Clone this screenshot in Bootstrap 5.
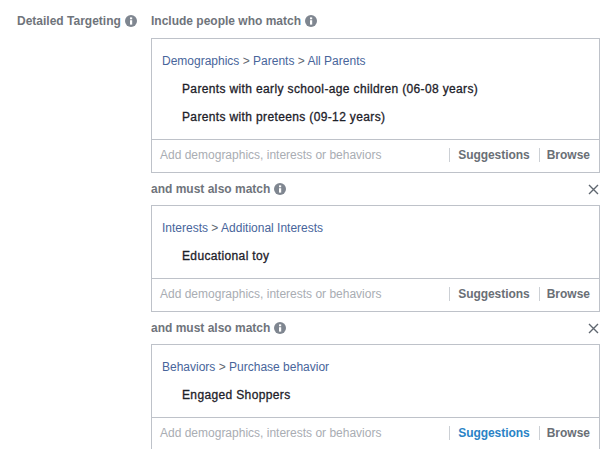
<!DOCTYPE html>
<html lang="en">
<head>
<meta charset="utf-8">
<title>Detailed Targeting</title>
<link href="https://cdn.jsdelivr.net/npm/bootstrap@5.3.0/dist/css/bootstrap.min.css" rel="stylesheet">
<style>
html,body{height:449px;overflow:hidden;background:#fff}
body{font-family:"Liberation Sans",Arial,sans-serif;font-size:12px;color:#1d2129;line-height:16px}
.page-wrap{padding:13px 13px 0 17px}
.side-label{width:134px;flex:none;font-weight:700;color:#6f747b}
.main-col{width:449px;flex:none}
.head-row{height:18px;margin-bottom:7px;font-weight:700;color:#6f747b}
.head-row.next{height:17px;margin-top:8px;margin-bottom:7px}
.info-ico{width:12px;height:12px;margin-left:4px;vertical-align:-1.5px}
.close-ico{width:11px;height:11px;margin:3px 1px 0 0;display:block}
.tbox{border:1px solid #bec2c9}
.tbox-body{padding:14px 10px 3px 10px}
.crumb{color:#48659b;height:16px;margin-bottom:12px}
.crumb span{color:#606770}
.pick{padding-left:20px;color:#1d2129;height:16px;margin-bottom:12px;letter-spacing:.36px;-webkit-text-stroke:.3px #1d2129}
.tbox-foot{height:33px;border-top:1px solid #bec2c9;margin-top:-1px;padding:0 9px 2px 8px}
.tbox-foot .ph{color:#a9adb3}
.foot-link{font-weight:700;color:#6a6f76;border-left:1px solid #ccd0d5;height:14px;line-height:14px;padding-left:7px;margin-left:9px}
.foot-link.sug{letter-spacing:-.05px;padding-left:8px}
.foot-link.active{color:#2a83c6}
</style>
</head>
<body>
<svg width="0" height="0" class="d-block" aria-hidden="true"><defs><symbol id="inf" viewBox="0 0 12 12"><circle cx="6" cy="6" r="6" fill="#7f8690"/><rect x="5" y="5.2" width="2.2" height="4.4" fill="#fff"/><rect x="5" y="2.4" width="2.2" height="1.9" fill="#fff"/></symbol></defs></svg>
<div class="page-wrap d-flex">
  <div class="side-label">Detailed Targeting<svg class="info-ico"><use href="#inf"/></svg></div>
  <div class="main-col">
    <div class="head-row">Include people who match<svg class="info-ico"><use href="#inf"/></svg></div>
    <div class="tbox">
      <div class="tbox-body">
        <div class="crumb">Demographics <span>&gt;</span> Parents <span>&gt;</span> All Parents</div>
        <div class="pick">Parents with early school-age children (06-08 years)</div>
        <div class="pick">Parents with preteens (09-12 years)</div>
      </div>
      <div class="tbox-foot d-flex align-items-center">
        <div class="ph flex-grow-1">Add demographics, interests or behaviors</div>
        <div class="foot-link sug">Suggestions</div><div class="foot-link">Browse</div>
      </div>
    </div>
    <div class="head-row next d-flex justify-content-between">
      <div>and must also match<svg class="info-ico"><use href="#inf"/></svg></div>
      <svg class="close-ico" viewBox="0 0 11 11"><path d="M1 1 10 10M10 1 1 10" stroke="#606770" stroke-width="1.4" fill="none"/></svg>
    </div>
    <div class="tbox">
      <div class="tbox-body">
        <div class="crumb">Interests <span>&gt;</span> Additional Interests</div>
        <div class="pick">Educational toy</div>
      </div>
      <div class="tbox-foot d-flex align-items-center">
        <div class="ph flex-grow-1">Add demographics, interests or behaviors</div>
        <div class="foot-link sug">Suggestions</div><div class="foot-link">Browse</div>
      </div>
    </div>
    <div class="head-row next d-flex justify-content-between">
      <div>and must also match<svg class="info-ico"><use href="#inf"/></svg></div>
      <svg class="close-ico" viewBox="0 0 11 11"><path d="M1 1 10 10M10 1 1 10" stroke="#606770" stroke-width="1.4" fill="none"/></svg>
    </div>
    <div class="tbox">
      <div class="tbox-body">
        <div class="crumb">Behaviors <span>&gt;</span> Purchase behavior</div>
        <div class="pick">Engaged Shoppers</div>
      </div>
      <div class="tbox-foot d-flex align-items-center">
        <div class="ph flex-grow-1">Add demographics, interests or behaviors</div>
        <div class="foot-link sug active">Suggestions</div><div class="foot-link">Browse</div>
      </div>
    </div>
  </div>
</div>
<script src="https://cdn.jsdelivr.net/npm/bootstrap@5.3.0/dist/js/bootstrap.bundle.min.js"></script>
</body>
</html>
